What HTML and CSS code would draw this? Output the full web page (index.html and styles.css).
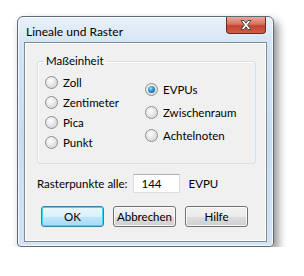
FILE: index.html
```html
<!DOCTYPE html>
<html>
  <head>
    <meta charset="utf-8">
    <link rel="stylesheet" href="styles.css">
  </head>
  <body>
    <div class="window">
      <div class="titlebar">
        <span class="title">Lineale und Raster</span>
        <div class="close">
          <svg width="16" height="12" viewBox="0 0 16 12">
            <path d="M3,1.5 L6,1.5 L8,4.2 L10,1.5 L13,1.5 L9.6,6 L13,10.5 L10,10.5 L8,7.8 L6,10.5 L3,10.5 L6.4,6 Z"
              style="fill:white;stroke:#4a4a4a;stroke-width:1px;stroke-linejoin:round;" />
          </svg>
        </div>
      </div>
      <div class="client">
        <fieldset class="group">
          <legend>Maßeinheit</legend>
          <div class="cols">
            <div class="col left">
              <label class="opt"><span class="radio"></span>Zoll</label>
              <label class="opt"><span class="radio"></span>Zentimeter</label>
              <label class="opt"><span class="radio"></span>Pica</label>
              <label class="opt"><span class="radio"></span>Punkt</label>
            </div>
            <div class="col right">
              <label class="opt"><span class="radio checked"></span>EVPUs</label>
              <label class="opt"><span class="radio"></span>Zwischenraum</label>
              <label class="opt"><span class="radio"></span>Achtelnoten</label>
            </div>
          </div>
        </fieldset>
        <div class="grid-row">
          <span class="label">Rasterpunkte alle:</span>
          <div class="input">144</div>
          <span class="unit">EVPU</span>
        </div>
        <div class="buttons">
          <div class="btn default">OK</div>
          <div class="btn">Abbrechen</div>
          <div class="btn">Hilfe</div>
        </div>
      </div>
    </div>
  </body>
</html>
```
FILE: styles.css
```css
body {
  margin: 0;
  background: white;
  font-family: Lato, "Open Sans", sans-serif;
  font-size: 11.5px;
  color: #000;
}

.window {
  margin: 16px 0 0 17px;
  width: 257px;
  height: 231px;
  box-sizing: border-box;
  border: 1px solid #5d6a78;
  border-radius: 6px 6px 4px 4px;
  background: linear-gradient(to bottom, #e9f1f9 0px, #d6e5f4 26px, #c9dcee 120px, #d4e4f3 231px);
  box-shadow: 4px 5px 10px rgba(0, 0, 0, 0.45), inset 0 0 0 1px rgba(255, 255, 255, 0.7);
  padding: 0 6px 4px 6px;
  display: flex;
  flex-direction: column;
}

.titlebar {
  height: 25px;
  display: flex;
  align-items: flex-start;
  justify-content: space-between;
}

.title {
  padding: 7px 0 0 2px;
  line-height: 16px;
  font-size: 12px;
}

.close {
  width: 40px;
  height: 17px;
  margin-right: 1px;
  box-sizing: border-box;
  border: 1px solid #6b2a22;
  border-top: none;
  border-radius: 0 0 4px 4px;
  background: linear-gradient(to bottom, #e8a89a 0%, #d7715f 45%, #c2432e 55%, #cf5e45 100%);
  display: flex;
  align-items: center;
  justify-content: center;
}

.client {
  flex: 1;
  background: #f0f0f0;
  border: 1px solid #7d8a98;
  box-shadow: inset 0 0 0 1px #ffffff;
  padding: 0 10px 0 12px;
  display: flex;
  flex-direction: column;
}

.group {
  margin: 11px 0 0 0;
  padding: 0 0 0 7px;
  height: 110px;
  box-sizing: border-box;
  border: 1px solid #d5dfe5;
  border-radius: 3px;
  box-shadow: inset 1px 1px 0 #ffffff;
}

.group legend {
  padding: 0 2px;
  margin-left: -1px;
  line-height: 14px;
}

.cols {
  display: flex;
}

.col {
  display: flex;
  flex-direction: column;
}

.col.left {
  width: 100px;
  padding-top: 7px;
  gap: 6px;
}

.col.right {
  padding-top: 14px;
  gap: 9px;
}

.opt {
  display: flex;
  align-items: center;
  gap: 4px;
  height: 14px;
}

.radio {
  width: 11px;
  height: 11px;
  border-radius: 50%;
  border: 1px solid #8f8f8f;
  background: radial-gradient(circle at 40% 35%, #ffffff 0%, #e4e4e4 50%, #cfcfcf 100%);
  display: flex;
  align-items: center;
  justify-content: center;
  margin-right: 1px;
}

.radio.checked::after {
  content: '';
  width: 7px;
  height: 7px;
  border-radius: 50%;
  background: radial-gradient(circle at 40% 35%, #9fe0ff 0%, #2a8fd0 45%, #0c4f8a 100%);
}

.grid-row {
  display: flex;
  align-items: center;
  margin-top: 9px;
  height: 20px;
}

.input {
  margin-left: 6px;
  width: 47px;
  height: 19px;
  box-sizing: border-box;
  background: white;
  border: 1px solid #d8dde2;
  border-top-color: #abadb3;
  padding: 1px 0 0 7px;
  line-height: 16px;
}

.unit {
  margin-left: 8px;
}

.buttons {
  display: flex;
  gap: 9px;
  margin-top: 13px;
  padding-left: 4px;
}

.btn {
  width: 63px;
  height: 21px;
  box-sizing: border-box;
  border: 1px solid #707070;
  border-radius: 3px;
  background: linear-gradient(to bottom, #f2f2f2 0%, #ebebeb 50%, #dddddd 51%, #cfcfcf 100%);
  box-shadow: inset 0 0 0 1px rgba(255, 255, 255, 0.8);
  text-align: center;
  line-height: 19px;
}

.btn.default {
  border-color: #3c7fb1;
  background: linear-gradient(to bottom, #eaf6fd 0%, #d9f0fc 50%, #bee6fd 51%, #a7d9f5 100%);
  box-shadow: inset 0 0 0 1px #48d0fa;
}
```
